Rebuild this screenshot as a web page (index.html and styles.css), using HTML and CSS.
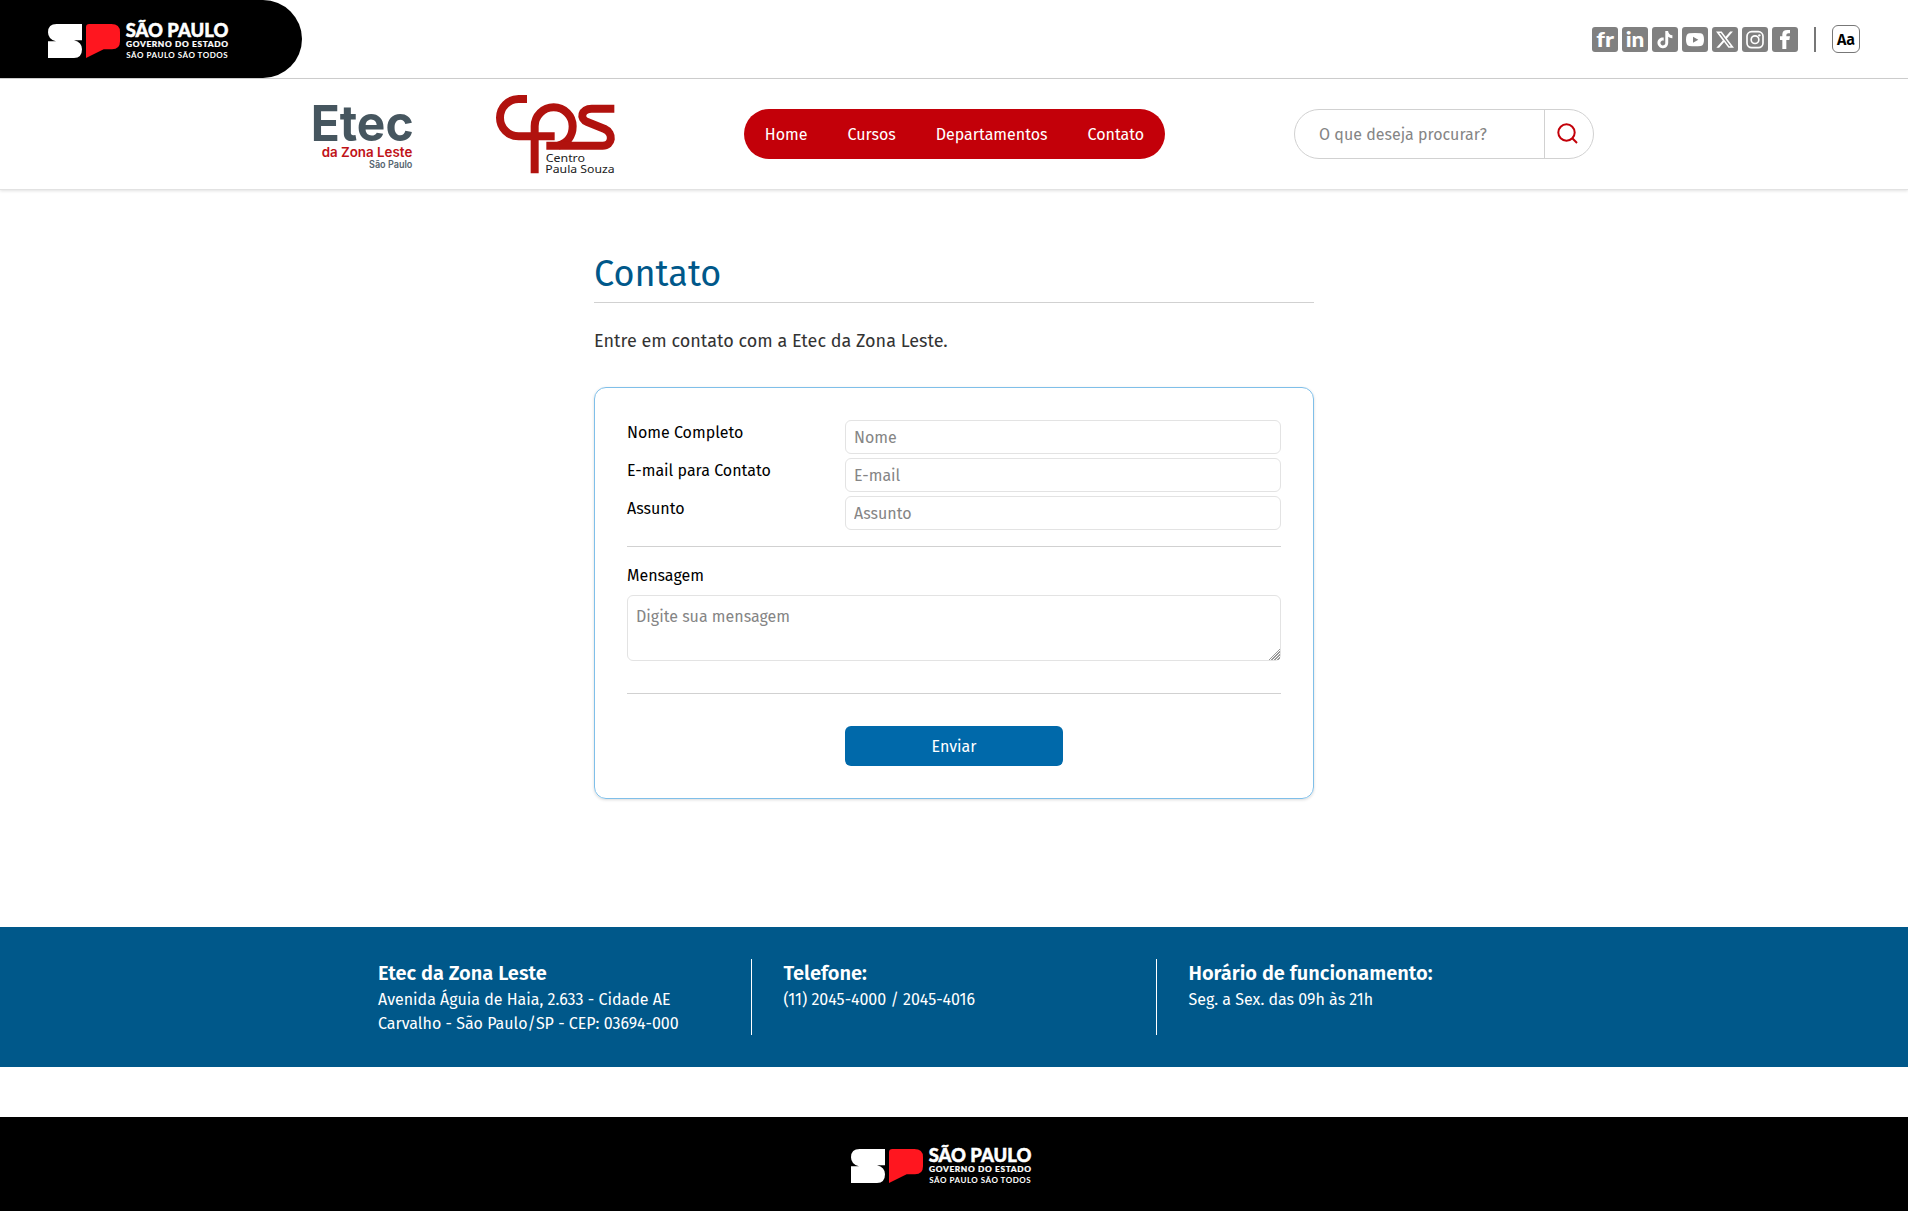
FILE: index.html
```html
<!DOCTYPE html>
<html lang="pt-BR">
<head>
<meta charset="utf-8">
<title>Contato - Etec da Zona Leste</title>
<link rel="stylesheet" href="styles.css">
</head>
<body>
<svg width="0" height="0" class="defs" aria-hidden="true">
  <symbol id="sp-logo" viewBox="144 60 540 117" overflow="visible">
    <path fill="#fff" d="M170 72H246V121H222Q246 127 246 148Q246 174 222 174H144V124H168Q144 118 144 97Q144 72 170 72Z"/>
    <path fill="#ff161f" d="M258 82Q258 72 268 72H334Q360 72 360 96V124Q360 148 336 148H311L258 174Z"/>
    <g fill="#fff" font-family="Lato, sans-serif" font-weight="900">
      <text x="377" y="112" font-size="55" stroke="#fff" stroke-width="1.5" textLength="308" lengthAdjust="spacingAndGlyphs">SÃO PAULO</text>
      <text x="378" y="141" font-size="25" stroke="#fff" stroke-width=".6" textLength="306" lengthAdjust="spacing">GOVERNO DO ESTADO</text>
      <text x="379" y="174" font-size="24" font-weight="700" textLength="304" lengthAdjust="spacing">SÃO PAULO SÃO TODOS</text>
    </g>
  </symbol>
</svg>

<div class="topbar">
  <a class="gov"><svg class="sp-logo"><use href="#sp-logo"/></svg></a>
  <div class="tools">
    <div class="social">
      <svg viewBox="0 0 78 75"><rect width="78" height="75" rx="9"/><text x="13" y="59" font-size="62" textLength="53" lengthAdjust="spacingAndGlyphs">fr</text></svg>
      <svg viewBox="0 0 78 75"><rect width="78" height="75" rx="9"/><text x="11" y="59" font-size="62" textLength="56" lengthAdjust="spacingAndGlyphs">in</text></svg>
      <svg viewBox="0 0 78 75"><rect width="78" height="75" rx="9"/><path transform="translate(13 12) scale(2.15)" d="M12.525.02c1.31-.02 2.61-.01 3.91-.02.08 1.53.63 3.09 1.75 4.17 1.12 1.11 2.7 1.62 4.24 1.79v4.03c-1.44-.05-2.89-.35-4.2-.97-.57-.26-1.1-.59-1.62-.93-.01 2.92.01 5.84-.02 8.75-.08 1.4-.54 2.79-1.35 3.94-1.31 1.92-3.58 3.17-5.91 3.21-1.43.08-2.86-.31-4.08-1.03-2.02-1.19-3.44-3.37-3.65-5.71-.02-.5-.03-1-.01-1.49.18-1.9 1.12-3.72 2.58-4.96 1.66-1.44 3.98-2.13 6.15-1.72.02 1.48-.04 2.96-.04 4.44-.99-.32-2.15-.23-3.02.37-.63.41-1.11 1.04-1.36 1.75-.21.51-.15 1.07-.14 1.61.24 1.64 1.82 3.02 3.5 2.87 1.12-.01 2.19-.66 2.77-1.61.19-.33.4-.67.41-1.06.1-1.79.06-3.57.07-5.36.01-4.03-.01-8.05.02-12.07z"/></svg>
      <svg viewBox="0 0 78 75"><rect width="78" height="75" rx="9"/><path fill-rule="evenodd" d="M22 19Q39 17 56 19Q66 20 66 38Q66 56 56 57Q39 59 22 57Q12 56 12 38Q12 20 22 19ZM33 29V47L49 38Z"/></svg>
      <svg viewBox="0 0 78 75"><rect width="78" height="75" rx="9"/><path transform="translate(12 11) scale(2.25)" d="M18.901 1.153h3.68l-8.04 9.19L24 22.846h-7.406l-5.8-7.584-6.638 7.584H.474l8.6-9.83L0 1.154h7.594l5.243 6.932ZM17.61 20.644h2.039L6.486 3.24H4.298Z"/></svg>
      <svg viewBox="0 0 78 75"><rect width="78" height="75" rx="9"/><g class="outline"><rect x="15" y="14" width="48" height="48" rx="14"/><circle cx="39" cy="38" r="11.5"/></g><circle class="dot" cx="52" cy="25" r="3.5"/></svg>
      <svg viewBox="0 0 78 75"><rect width="78" height="75" rx="9"/><path d="M31 66V39H24V28H31V22Q31 9 46 9H54V19H49Q43 19 43 24V28H54L52 39H43V66Z"/></svg>
    </div>
    <span class="divider"></span>
    <button class="font-size">Aa</button>
  </div>
</div>

<header class="header">
  <div class="header-inner">
    <div class="brands">
      <svg class="etec" viewBox="42 72 297 198">
        <g font-family="Inter, sans-serif">
          <text x="32" y="182" font-size="149" font-weight="700" fill="#46565f" textLength="309" lengthAdjust="spacingAndGlyphs">Etec</text>
          <text x="65" y="230" font-size="41" font-weight="600" fill="#c01318" textLength="272" lengthAdjust="spacingAndGlyphs">da Zona Leste</text>
          <text x="207" y="265" font-size="29" font-weight="600" fill="#56656f" textLength="130" lengthAdjust="spacingAndGlyphs">São Paulo</text>
        </g>
      </svg>
      <svg class="cps" viewBox="588 45 357 240">
        <g fill="none" stroke="#b1120e" stroke-width="24">
          <path d="M681 57H656A56 56 0 0 0 656 169H764"/>
          <path d="M704 280V139A57 57 0 0 1 818 139C818 170 800 190 775 197"/>
          <path d="M943 86H875C844 86 837 116 862 126L914 147C942 160 937 197 908 197H739"/>
        </g>
        <g font-family="'Noto Sans', sans-serif" fill="#222" font-size="34">
          <text x="737" y="245" textLength="118" lengthAdjust="spacingAndGlyphs">Centro</text>
          <text x="736" y="279" textLength="208" lengthAdjust="spacingAndGlyphs">Paula Souza</text>
        </g>
      </svg>
    </div>
    <nav class="nav"><a>Home</a><a>Cursos</a><a>Departamentos</a><a>Contato</a></nav>
    <form class="search">
      <input type="text" placeholder="O que deseja procurar?">
      <button type="button" aria-label="Procurar"><svg viewBox="0 0 24 24"><circle cx="10.5" cy="10.5" r="8.2"/><path d="M16.3 16.3L21 21"/></svg></button>
    </form>
  </div>
</header>

<main class="main">
  <h1>Contato</h1>
  <p class="lead">Entre em contato com a Etec da Zona Leste.</p>
  <form class="card">
    <div class="fields">
      <label for="nome">Nome Completo</label><input id="nome" type="text" placeholder="Nome">
      <label for="email">E-mail para Contato</label><input id="email" type="text" placeholder="E-mail">
      <label for="assunto">Assunto</label><input id="assunto" type="text" placeholder="Assunto">
    </div>
    <div class="message">
      <label for="mensagem">Mensagem</label>
      <textarea id="mensagem" rows="2" placeholder="Digite sua mensagem"></textarea>
    </div>
    <div class="actions"><button type="button">Enviar</button></div>
  </form>
</main>

<section class="info">
  <div class="info-inner">
    <div><h2>Etec da Zona Leste</h2><p>Avenida Águia de Haia, 2.633 - Cidade AE Carvalho - São Paulo/SP - CEP: 03694-000</p></div>
    <div><h2>Telefone:</h2><p>(11) 2045-4000 / 2045-4016</p></div>
    <div><h2>Horário de funcionamento:</h2><p>Seg. a Sex. das 09h às 21h</p></div>
  </div>
</section>
<footer class="footer"><svg class="sp-logo"><use href="#sp-logo"/></svg></footer>
</body>
</html>
```
FILE: styles.css
```css
*, *::before, *::after { box-sizing: border-box; }
body {
  margin: 0;
  background: #fff;
  color: #000;
  font: 16px/24px "Fira Sans", "Noto Sans", sans-serif;
}
input, textarea, button { font: inherit; color: inherit; margin: 0; }
h1, h2, p { margin: 0; }
svg { display: block; overflow: visible; }
.defs { position: absolute; }
.sp-logo { width: 180px; height: 39px; }

.topbar {
  display: flex;
  justify-content: space-between;
  align-items: center;
  height: 79px;
  border-bottom: 1px solid #d1d1d1;
}
.gov {
  width: 302px;
  height: 78px;
  padding: 20px 0 0 48px;
  background: #000;
  border-radius: 0 39px 39px 0;
}
.tools { display: flex; align-items: center; padding-right: 48px; }
.social { display: flex; gap: 4px; }
.social svg { width: 26px; height: 25px; fill: #fff; }
.social svg > rect { fill: #808080; }
.social text { font-family: Lato, sans-serif; font-weight: 900; }
.social .outline { fill: none; stroke: #fff; stroke-width: 5; }
.divider { width: 2px; height: 25px; margin: 0 16px; background: #777; }
.font-size {
  width: 28px;
  height: 28px;
  padding: 2px 0 0;
  border: 1px solid #777;
  border-radius: 6px;
  background: #fff;
  font-weight: 600;
}

.header {
  height: 111px;
  border-bottom: 1px solid #e2e2e2;
  box-shadow: 0 1px 3px rgba(0, 0, 0, .12);
}
.header-inner {
  display: flex;
  justify-content: space-between;
  align-items: center;
  width: 1280px;
  height: 110px;
  margin: 0 auto;
}
.brands { display: flex; align-items: center; gap: 83px; }
.etec { width: 99px; height: 66px; margin-top: 5px; }
.cps { width: 119px; height: 80px; margin-top: 2px; }
.nav {
  display: flex;
  align-items: center;
  gap: 40px;
  height: 50px;
  padding: 2px 21px 0;
  border-radius: 25px;
  background: #c30009;
  color: #fff;
}
.search {
  display: flex;
  width: 300px;
  height: 50px;
  border: 1px solid #d1d1d1;
  border-radius: 25px;
  overflow: hidden;
}
.search input {
  flex: 1;
  min-width: 0;
  padding: 2px 24px 0;
  border: 0;
  background: none;
}
::placeholder { color: #858585; opacity: 1; }
.search button {
  width: 49px;
  padding: 0 0 0 11px;
  border: 0;
  border-left: 1px solid #d1d1d1;
  background: none;
}
.search button svg { width: 24px; height: 24px; fill: none; stroke: #c30009; stroke-width: 2; }

.main { width: 720px; margin: 64px auto 128px; }
h1 {
  padding-bottom: 8px;
  border-bottom: 1px solid #d1d1d1;
  color: #00588a;
  font-size: 36px;
  line-height: 40px;
  font-weight: 400;
}
.lead { margin: 24px 0 32px; color: #333; font-size: 18px; line-height: 28px; }
.card {
  padding: 32px;
  border: 1px solid #7fbfe9;
  border-radius: 12px;
  box-shadow: 0 1px 3px rgba(0, 0, 0, .15);
}
.fields {
  display: grid;
  grid-template-columns: 1fr 2fr;
  gap: 4px 0;
  padding-bottom: 16px;
  border-bottom: 1px solid #d1d1d1;
}
.fields label { padding-top: 1px; }
.fields input, textarea {
  border: 1px solid #e3e3e3;
  border-radius: 6px;
  background: #fff;
}
.fields input { width: 100%; height: 34px; padding: 0 8px; }
.message {
  display: grid;
  gap: 7px;
  padding: 17px 0 32px;
  border-bottom: 1px solid #d1d1d1;
}
textarea { display: block; width: 100%; height: 66px; padding: 9px 8px 7px; }
textarea::-webkit-resizer {
  background:
    linear-gradient(135deg, #fff 62%, transparent 62%),
    repeating-linear-gradient(135deg, #999 0 1px, #fff 1px 2.1px);
}
.actions { display: flex; justify-content: center; padding-top: 32px; }
.actions button {
  width: 218px;
  height: 40px;
  padding: 2px 0 0;
  border: 0;
  border-radius: 6px;
  background: #0069aa;
  color: #fff;
}

.info { padding: 32px 0; background: #00588a; color: #fff; }
.info-inner {
  display: grid;
  grid-template-columns: 405px 405px 406px;
  width: 1216px;
  margin: 0 auto;
}
.info-inner > div { height: 76px; padding: 0 32px; }
.info-inner > div + div { padding-left: 31.5px; border-left: 1px solid #fff; }
.info h2 { font-size: 20px; line-height: 28px; font-weight: 600; }
.info p { padding-top: 1px; }
.footer {
  display: flex;
  justify-content: center;
  height: 94px;
  margin-top: 50px;
  padding: 28px 26px 0 0;
  background: #000;
}
```
